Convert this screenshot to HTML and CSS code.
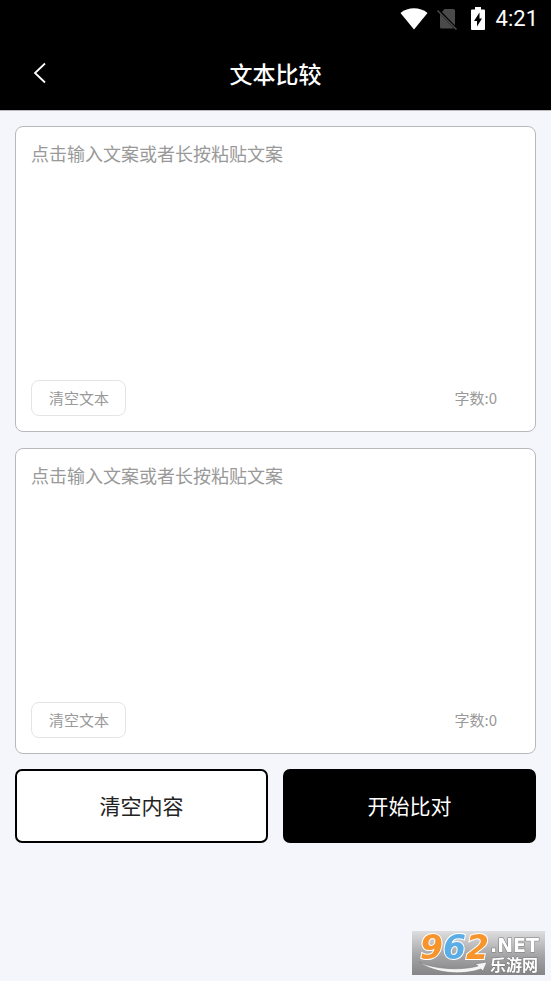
FILE: index.html
```html
<!DOCTYPE html>
<html lang="zh-CN">
<head>
<meta charset="utf-8">
<meta name="viewport" content="width=device-width, initial-scale=1">
<title>文本比较</title>
<link rel="stylesheet" href="styles.css">
</head>
<body>
<header class="header">
  <div class="status">
    <svg class="status-wifi" viewBox="0 0 28 22" aria-hidden="true"><path d="M14 21.500 L.5 5 C8-1.200 20-1.200 27.500 5 Z" fill="#fff"/></svg>
    <svg class="status-sim" viewBox="0 0 22 22" aria-hidden="true"><path d="M8.500 1H17.500a1.500 1.500 0 0 1 1.500 1.500V17.500L6 4Z M4 6L18 20.500H5.500A1.500 1.500 0 0 1 4 19Z" fill="#4a4a4a"/><path d="M1.500 2.500L20.500 21.500" stroke="#4a4a4a" stroke-width="1.600"/></svg>
    <svg class="status-battery" viewBox="0 0 14 23" aria-hidden="true"><path d="M4 0h6v2.500h3A1 1 0 0 1 14 3.500v18.500a1 1 0 0 1-1 1h-12A1 1 0 0 1 0 22V3.500a1 1 0 0 1 1-1h3Z" fill="#fff"/><path d="M8.500 5.500L3 14h3v5.500L11 11.500H8.500Z" fill="#000"/></svg>
    <time class="clock">4:21</time>
  </div>
  <nav class="nav">
    <button class="back" type="button" aria-label="返回"><svg viewBox="0 0 14 22" aria-hidden="true"><path d="M12 1.500L2 11l10 9.500" fill="none" stroke="#fff" stroke-width="1.800"/></svg></button>
    <h1 class="title">文本比较</h1>
  </nav>
</header>
<main class="main">
  <div class="cards">
    <section class="card">
      <textarea class="input" aria-label="文案一" placeholder="点击输入文案或者长按粘贴文案"></textarea>
      <div class="card-foot">
        <button class="clear" type="button">清空文本</button>
        <span class="count">字数:0</span>
      </div>
    </section>
    <section class="card">
      <textarea class="input" aria-label="文案二" placeholder="点击输入文案或者长按粘贴文案"></textarea>
      <div class="card-foot">
        <button class="clear" type="button">清空文本</button>
        <span class="count">字数:0</span>
      </div>
    </section>
  </div>
  <div class="actions">
    <button class="action" type="button">清空内容</button>
    <button class="action action-primary" type="button">开始比对</button>
  </div>
</main>
<svg class="watermark" viewBox="0 0 133 44" role="img" aria-label="962.NET 乐游网">
  <defs>
    <linearGradient id="plate" x1="0" y1="0" x2="0" y2="1">
      <stop offset="0" stop-color="#dedee0"/><stop offset=".55" stop-color="#a5a5a7"/><stop offset="1" stop-color="#858587"/>
    </linearGradient>
  </defs>
  <rect width="133" height="44" fill="url(#plate)"/>
  <path d="M7 31C22 38 48 40 66 35L63 33L75 31L71 40L69 38C49 45 22 42 7 31Z" fill="#f4f4f4" stroke="#777" stroke-width=".6"/>
  <text class="mark-digits" x="8" y="28"><tspan fill="#f7942b">9</tspan><tspan fill="#5aaee5">6</tspan><tspan fill="#f7942b">2</tspan></text>
  <text class="mark-net" x="78" y="21">.NET</text>
  <text class="mark-name" x="78" y="40">乐游网</text>
</svg>
</body>
</html>
```

FILE: styles.css
```css
* {
  box-sizing: border-box;
}

body {
  margin: 0;
  min-height: 100vh;
  background: #f5f6fb;
  font-family: "Noto Sans CJK SC", sans-serif;
}

button,
textarea {
  font: inherit;
}

.header {
  background: #000;
  color: #fff;
  border-bottom: 1px solid #bbb;
}

.status {
  display: flex;
  align-items: center;
  justify-content: flex-end;
  height: 37px;
  padding-right: 13px;
}

.status-wifi {
  width: 28px;
  height: 22px;
  margin-right: 8px;
}

.status-sim {
  width: 22px;
  height: 22px;
  margin-right: 13px;
}

.status-battery {
  width: 14px;
  height: 23px;
  margin-right: 11px;
}

.clock {
  font: 400 22px/26px Roboto, sans-serif;
}

.nav {
  display: grid;
  grid-template-columns: 48px 1fr 48px;
  align-items: center;
  height: 73px;
  padding: 0 16px 2px;
}

.back {
  display: flex;
  align-items: center;
  justify-content: center;
  height: 48px;
  padding: 0;
  border: 0;
  background: none;
}

.back svg {
  width: 14px;
  height: 22px;
}

.title {
  margin: 0;
  font-size: 23px;
  line-height: 32px;
  font-weight: 500;
  text-align: center;
}

.main {
  display: grid;
  gap: 15px;
  padding: 15px;
}

.cards {
  display: grid;
  gap: 16px;
}

.card {
  display: flex;
  flex-direction: column;
  padding: 15px;
  border: 1px solid #b9b9bd;
  border-radius: 8px;
  background: #fff;
}

.input {
  display: block;
  width: 100%;
  height: 238px;
  padding: 0;
  border: 0;
  outline: 0;
  resize: none;
  background: none;
  color: #222;
  font-size: 18px;
  line-height: 22px;
}

.input::placeholder {
  color: #999;
}

.card-foot {
  display: flex;
  align-items: center;
  justify-content: space-between;
  padding-right: 23px;
  color: #999;
  font-size: 15px;
  line-height: 22px;
}

.clear {
  height: 36px;
  padding: 0 16px 0 17px;
  border: 1px solid #e4e4e4;
  border-radius: 8px;
  background: #fff;
  color: inherit;
}

.actions {
  display: grid;
  grid-template-columns: 1fr 1fr;
  gap: 15px;
}

.action {
  height: 74px;
  padding: 0 0 2px;
  border: 2px solid #000;
  border-radius: 7px;
  background: #fff;
  color: #222;
  font-size: 21px;
  line-height: 30px;
}

.action-primary {
  background: #000;
  color: #fff;
}

.watermark {
  position: fixed;
  right: 6px;
  bottom: 6px;
  width: 133px;
  height: 44px;
  overflow: visible;
}

.mark-digits {
  font: italic 700 33px "DejaVu Sans", sans-serif;
  stroke: #fff;
  stroke-width: 2px;
  paint-order: stroke;
}

.mark-net {
  font: 700 19px "DejaVu Sans", sans-serif;
  fill: #fff;
  stroke: #777;
  stroke-width: 1px;
  paint-order: stroke;
}

.mark-name {
  font: 700 16px "Noto Sans CJK SC", sans-serif;
  fill: #fff;
  stroke: #777;
  stroke-width: 1px;
  paint-order: stroke;
}
```
